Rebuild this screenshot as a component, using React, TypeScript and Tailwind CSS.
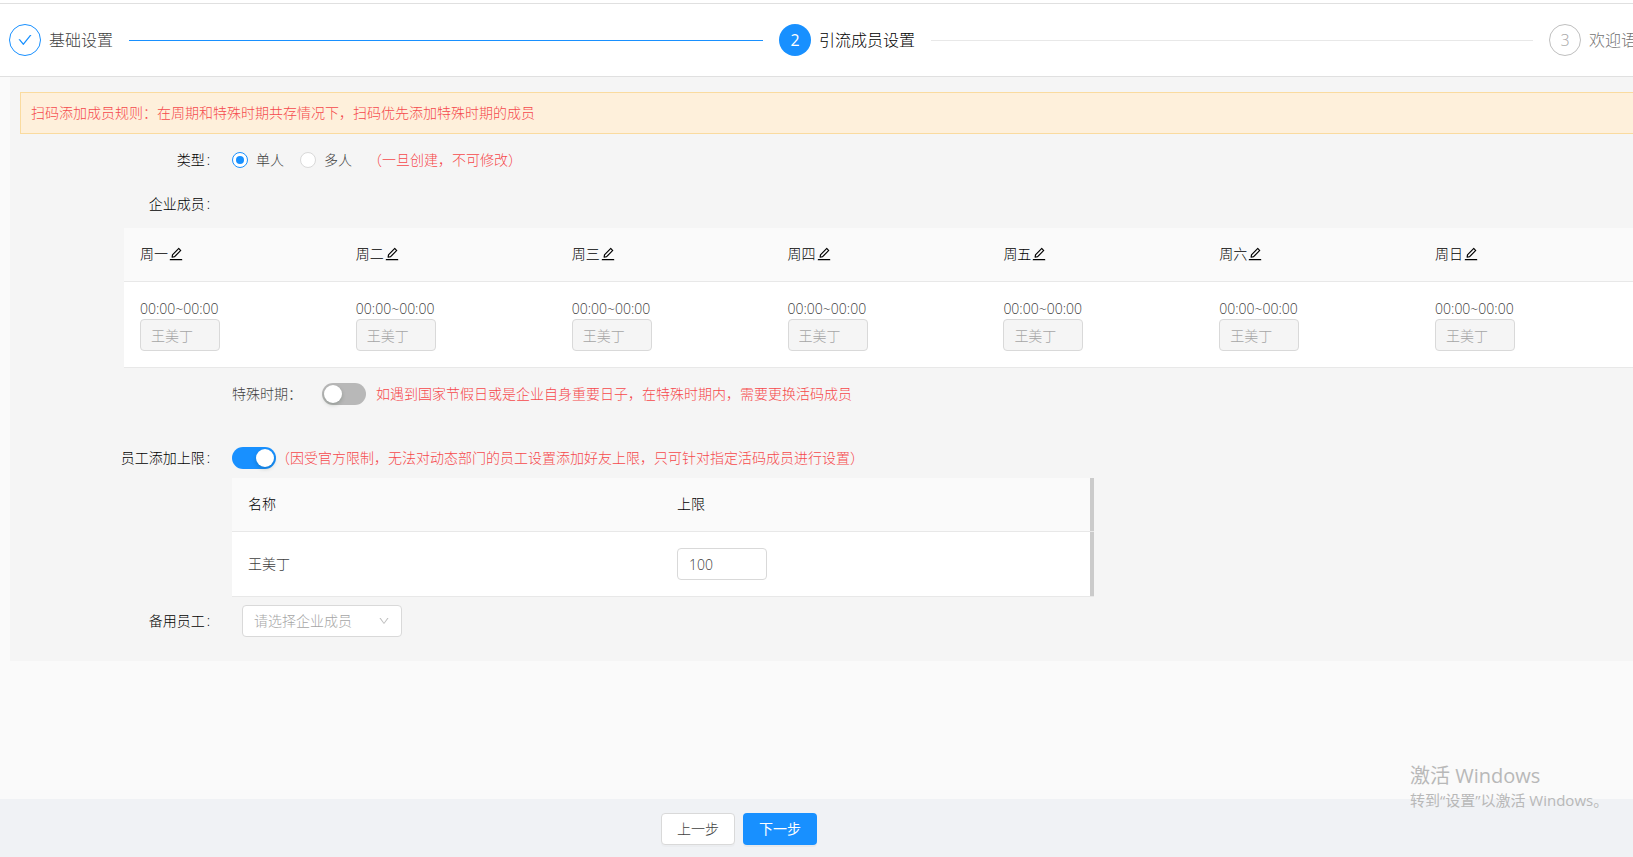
import React, { useState } from 'react';
import { AiOutlineCheck, AiOutlineDown, AiOutlineEdit } from 'react-icons/ai';

const weekDays = ['周一', '周二', '周三', '周四', '周五', '周六', '周日'];

interface FormRowProps {
  label?: string;
  htmlFor?: string;
  className?: string;
  children?: React.ReactNode;
}

const FormRow: React.FC<FormRowProps> = ({ label, htmlFor, className = '', children }) => (
  <div className={`flex h-8 items-center ${className}`}>
    <div className="w-[222px] shrink-0 pr-[22px] text-right text-black">
      {label && (
        <label htmlFor={htmlFor}>
          {label}
          <span className="ml-0.5">:</span>
        </label>
      )}
    </div>
    {children}
  </div>
);

interface SwitchProps {
  id: string;
  label: string;
  checked: boolean;
  onChange: (checked: boolean) => void;
}

const Switch: React.FC<SwitchProps> = ({ id, label, checked, onChange }) => (
  <input
    id={id}
    type="checkbox"
    role="switch"
    aria-label={label}
    checked={checked}
    onChange={(e) => onChange(e.target.checked)}
    className="h-[22px] w-11 shrink-0 cursor-pointer appearance-none rounded-full bg-[#b8b8b8] p-0.5 before:block before:size-[18px] before:rounded-full before:bg-white before:shadow-[0_2px_4px_rgba(0,35,11,0.2)] checked:bg-[#1890ff] checked:before:ml-[22px]"
  />
);

interface RadioProps {
  name: string;
  label: string;
  checked: boolean;
  onChange: () => void;
}

const Radio: React.FC<RadioProps> = ({ name, label, checked, onChange }) => (
  <label className="mr-4 flex cursor-pointer items-center gap-2">
    <input
      type="radio"
      name={name}
      checked={checked}
      onChange={onChange}
      className="grid size-4 appearance-none place-content-center rounded-full border border-[#d9d9d9] bg-white before:size-2 before:rounded-full checked:border-[#1890ff] checked:before:bg-[#1890ff]"
    />
    {label}
  </label>
);

const Steps: React.FC = () => (
  <ol className="flex h-[72px] items-center overflow-hidden pl-[9px] text-base font-light whitespace-nowrap">
    <li className="flex flex-1 items-center">
      <span className="flex size-8 items-center justify-center rounded-full border border-[#1890ff] text-[#1890ff]">
        <AiOutlineCheck className="size-4" />
      </span>
      <span className="ml-2 text-[#404040]">基础设置</span>
      <span className="mx-4 h-px flex-1 bg-[#1890ff]" />
    </li>
    <li className="flex flex-1 items-center">
      <span className="flex size-8 items-center justify-center rounded-full bg-[#1890ff] font-normal text-white">2</span>
      <span className="ml-2 text-black">引流成员设置</span>
      <span className="mx-4 h-px flex-1 bg-[#e8e8e8]" />
    </li>
    <li className="flex w-[84px] items-center">
      <span className="flex size-8 shrink-0 items-center justify-center rounded-full border border-[#bfbfbf] text-[#a6a6a6]">
        3
      </span>
      <span className="ml-2 text-[#737373]">欢迎语</span>
    </li>
  </ol>
);

const WeekTable: React.FC = () => (
  <table className="w-[calc(100%+2px)] table-fixed border-collapse text-left">
    <thead>
      <tr className="border-b border-[#e8e8e8] bg-[#fafafa]">
        {weekDays.map((day) => (
          <th key={day} className="h-[53px] px-4 font-light text-black">
            <span className="flex items-center">
              {day}
              <button type="button" aria-label={`编辑${day}`} className="cursor-pointer">
                <AiOutlineEdit className="size-4" />
              </button>
            </span>
          </th>
        ))}
      </tr>
    </thead>
    <tbody>
      <tr className="border-b border-[#e8e8e8] bg-white">
        {weekDays.map((day) => (
          <td key={day} className="p-4">
            <div className="h-[21px] text-sm leading-[21px]">00:00~00:00</div>
            <input
              type="text"
              aria-label={`${day}成员`}
              value="王美丁"
              disabled
              className="block h-8 w-20 rounded border border-[#d9d9d9] bg-[#f5f5f5] px-2.5 text-[#a6a6a6]"
            />
          </td>
        ))}
      </tr>
    </tbody>
  </table>
);

const LimitTable: React.FC = () => {
  const [limit, setLimit] = useState('100');

  return (
    <table className="w-[862px] table-fixed border-collapse text-left">
      <thead>
        <tr className="border-b border-[#e8e8e8] bg-[#fafafa]">
          <th className="h-[54px] px-4 font-light text-black">名称</th>
          <th className="px-4 font-light text-black">上限</th>
          <th className="w-1 bg-[#cbcbcb]" />
        </tr>
      </thead>
      <tbody>
        <tr className="border-b border-[#e8e8e8] bg-white">
          <td className="p-4">王美丁</td>
          <td className="p-4">
            <input
              type="text"
              aria-label="上限"
              value={limit}
              onChange={(e) => setLimit(e.target.value)}
              className="block h-8 w-[90px] rounded border border-[#d9d9d9] bg-white px-[11px]"
            />
          </td>
          <td className="bg-[#cbcbcb]" />
        </tr>
      </tbody>
    </table>
  );
};

const App: React.FC = () => {
  const [type, setType] = useState<'single' | 'multi'>('single');
  const [special, setSpecial] = useState(false);
  const [limited, setLimited] = useState(true);

  return (
    <div className="relative flex min-h-screen flex-col overflow-hidden bg-[#fafafa] font-['Open_Sans','Noto_Sans_CJK_SC',sans-serif] text-sm font-light text-[#404040]">
      <header className="border-b border-[#e0e0e0] bg-white pt-[3px]">
        <div className="border-t border-[#e0e0e0]">
          <Steps />
        </div>
      </header>

      <main className="ml-2.5 bg-[#f5f5f5] pt-[15px] pb-6">
        <div className="mb-2.5 ml-2.5 flex h-[42px] items-center border-y border-l border-[#fadb9f] bg-[#fef0db] px-2.5 text-[#f5494c]">
          扫码添加成员规则：在周期和特殊时期共存情况下，扫码优先添加特殊时期的成员
        </div>

        <FormRow label="类型" className="mb-3">
          <Radio name="type" label="单人" checked={type === 'single'} onChange={() => setType('single')} />
          <Radio name="type" label="多人" checked={type === 'multi'} onChange={() => setType('multi')} />
          <span className="text-[#f5494c]">（一旦创建，不可修改）</span>
        </FormRow>

        <FormRow label="企业成员" className="mb-2" />
        <div className="ml-[114px]">
          <WeekTable />
        </div>

        <FormRow className="mt-2.5 mb-8">
          <label htmlFor="special" className="mr-5">特殊时期：</label>
          <Switch id="special" label="特殊时期" checked={special} onChange={setSpecial} />
          <span className="ml-2.5 text-[#f5494c]">
            如遇到国家节假日或是企业自身重要日子，在特殊时期内，需要更换活码成员
          </span>
        </FormRow>

        <FormRow label="员工添加上限" htmlFor="limited" className="mb-1">
          <Switch id="limited" label="员工添加上限" checked={limited} onChange={setLimited} />
          <span className="text-[#f5494c]">
            （因受官方限制，无法对动态部门的员工设置添加好友上限，只可针对指定活码成员进行设置）
          </span>
        </FormRow>
        <div className="ml-[222px]">
          <LimitTable />
        </div>

        <FormRow label="备用员工" htmlFor="backup" className="mt-2">
          <div className="relative ml-2.5 w-40">
            <select
              id="backup"
              defaultValue=""
              className="h-8 w-full appearance-none rounded border border-[#d9d9d9] bg-white px-[11px] text-[#a6a6a6]"
            >
              <option value="">请选择企业成员</option>
            </select>
            <AiOutlineDown className="pointer-events-none absolute top-2.5 right-3 size-3 text-[#bfbfbf]" />
          </div>
        </FormRow>
      </main>

      <footer className="mt-auto flex h-[58px] items-center justify-center gap-2 bg-[#f0f2f5] pt-0.5 pr-[155px]">
        <button
          type="button"
          className="h-8 w-[74px] cursor-pointer rounded border border-[#d9d9d9] bg-white shadow-[0_2px_0_rgba(0,0,0,0.02)]"
        >
          上一步
        </button>
        <button
          type="button"
          className="h-8 w-[74px] cursor-pointer rounded bg-[#1890ff] font-normal text-white shadow-[0_2px_0_rgba(0,0,0,0.04)]"
        >
          下一步
        </button>
      </footer>

      {/* OS activation notice sits on top of the page */}
      <div className="pointer-events-none absolute right-0 bottom-[45px] w-[223px] font-normal text-[#b8b8b8]">
        <p className="text-xl leading-6">激活 Windows</p>
        <p className="text-[15px] leading-6">转到“设置”以激活 Windows。</p>
      </div>
    </div>
  );
};

export default App;
